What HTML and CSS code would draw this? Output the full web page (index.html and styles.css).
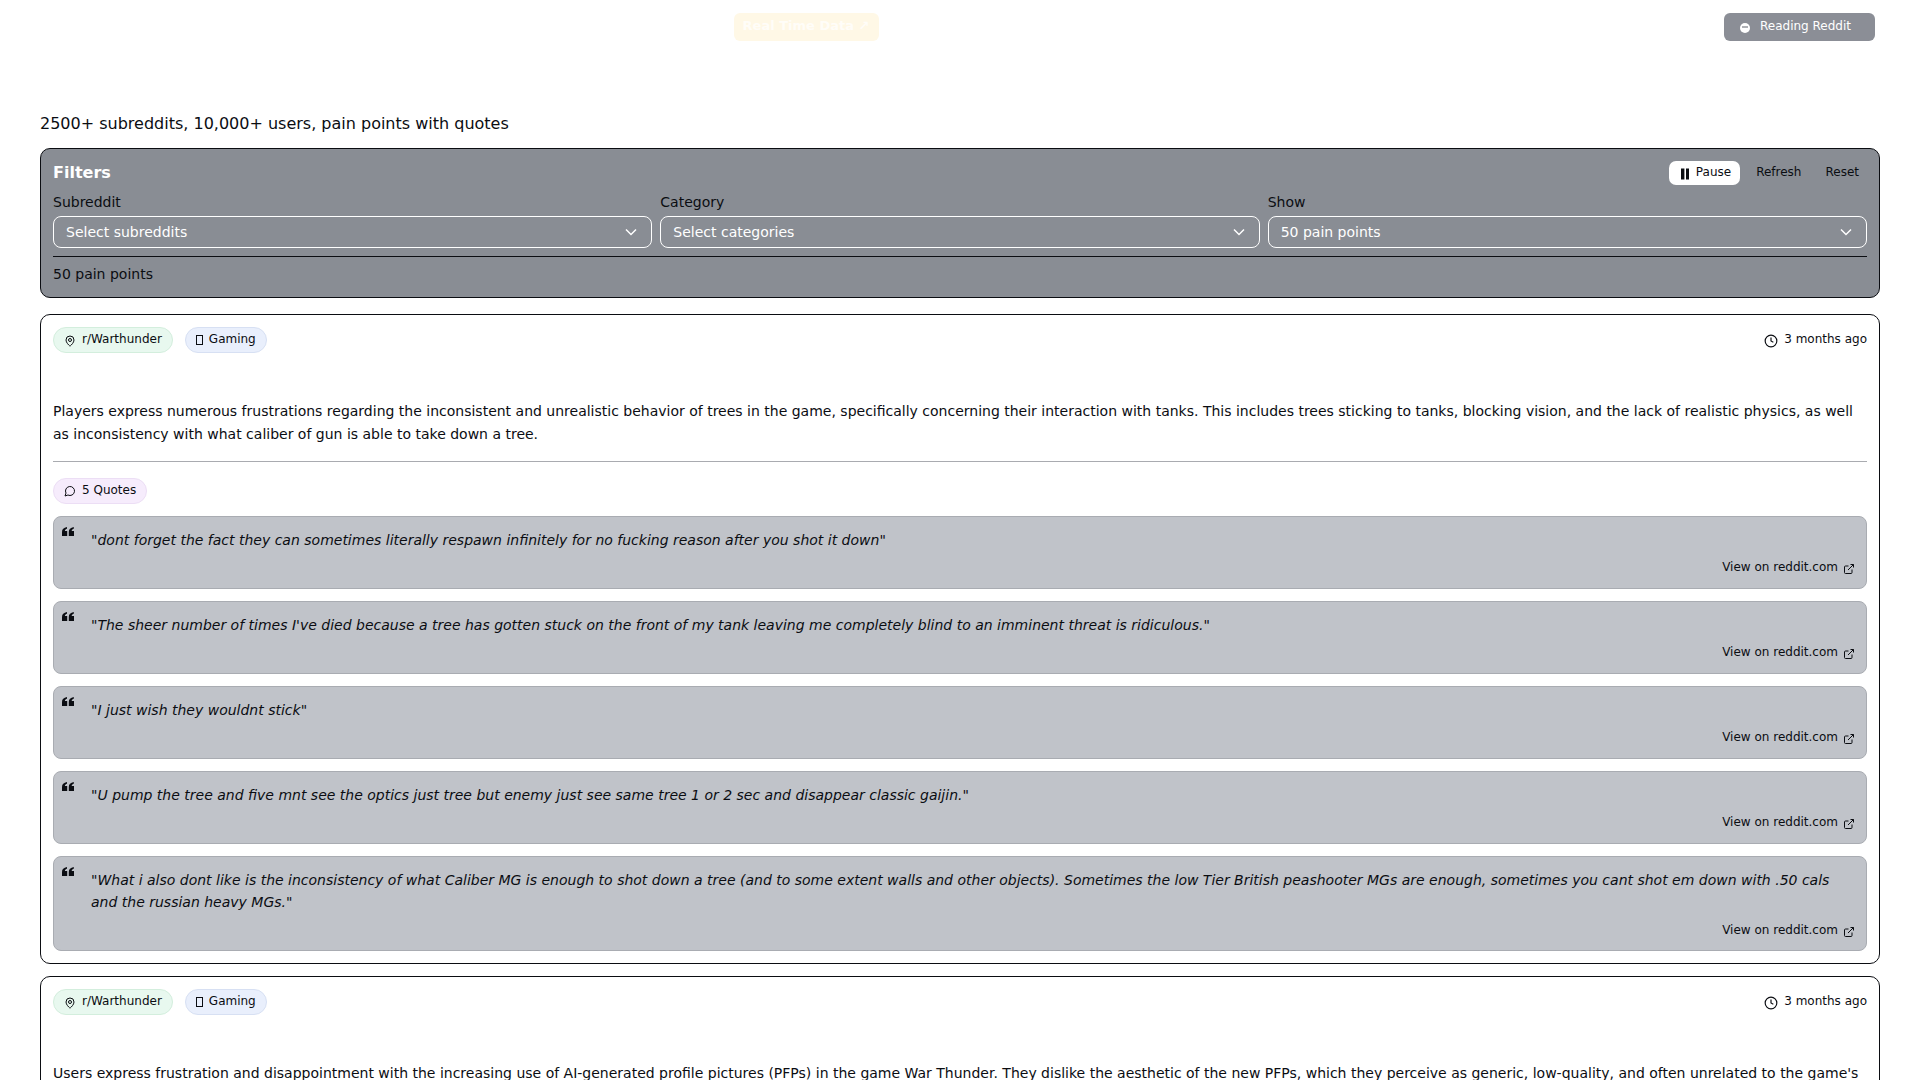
FILE: index.html
```html
<!DOCTYPE html>
<html lang="en">
<head>
    <meta charset="UTF-8">
    <meta name="viewport" content="width=device-width, initial-scale=1.0">
    <title>Pain Points</title>
    <link rel="stylesheet" href="styles.css">
</head>
<body>
    <header class="topbar">
        <a class="live-pill">Real Time Data ↗</a>
        <div class="reading-pill">
            <svg class="reading-icon" viewBox="0 0 12 12"><circle cx="6" cy="6" r="5" fill="currentColor"/><path d="M3 5h6" stroke="#8b8e96" stroke-width="1.4"/></svg>
            Reading Reddit
        </div>
    </header>

    <p class="tagline">2500+ subreddits, 10,000+ users, pain points with quotes</p>

    <section class="filters">
        <div class="filters-head">
            <h2>Filters</h2>
            <div class="filter-actions">
                <button class="btn btn-active">
                    <svg class="pause-icon" viewBox="0 0 12 12"><path d="M2 0.500h3.400v11H2zM7 0.500h3v11H7z" fill="currentColor"/></svg>
                    Pause
                </button>
                <button class="btn">Refresh</button>
                <button class="btn">Reset</button>
            </div>
        </div>
        <div class="filter-grid">
            <div class="field">
                <label>Subreddit</label>
                <div class="select">
                    <span>Select subreddits</span>
                    <svg class="chevron" viewBox="0 0 12 12"><path d="M1 3.500l5 5 5-5"/></svg>
                </div>
            </div>
            <div class="field">
                <label>Category</label>
                <div class="select">
                    <span>Select categories</span>
                    <svg class="chevron" viewBox="0 0 12 12"><path d="M1 3.500l5 5 5-5"/></svg>
                </div>
            </div>
            <div class="field">
                <label>Show</label>
                <div class="select">
                    <span>50 pain points</span>
                    <svg class="chevron" viewBox="0 0 12 12"><path d="M1 3.500l5 5 5-5"/></svg>
                </div>
            </div>
        </div>
        <div class="filter-count">50 pain points</div>
    </section>

    <article class="card">
        <div class="card-head">
            <div class="tags">
                <span class="tag tag-green">
                    <svg class="tag-icon" viewBox="0 0 24 24"><path d="M20 10c0 5-5.500 10.200-7.400 11.800a1 1 0 0 1-1.200 0C9.500 20.200 4 15 4 10a8 8 0 0 1 16 0"/><circle cx="12" cy="10" r="3"/></svg>
                    r/Warthunder
                </span>
                <span class="tag tag-blue"><span class="tofu"></span>Gaming</span>
            </div>
            <span class="time">
                <svg class="time-icon" viewBox="0 0 24 24"><circle cx="12" cy="12" r="10"/><path d="M12 6v6l4 2"/></svg>
                3 months ago
            </span>
        </div>
        <p class="summary">Players express numerous frustrations regarding the inconsistent and unrealistic behavior of trees in the game, specifically concerning their interaction with tanks. This includes trees sticking to tanks, blocking vision, and the lack of realistic physics, as well as inconsistency with what caliber of gun is able to take down a tree.</p>
        <hr class="rule">
        <span class="tag tag-purple">
            <svg class="tag-icon" viewBox="0 0 24 24"><path d="M7.900 20A9 9 0 1 0 4 16.100L2 22Z"/></svg>
            5 Quotes
        </span>
        <div class="quotes">
            <div class="quote">
                <svg class="quote-mark" viewBox="0 0 12 9"><path d="M0 9V5C0 2.200 1.700.6 5 0v1.800C3.600 2.200 2.900 3 2.900 4h2.300v5zM6.800 9V5C6.800 2.200 8.500.6 11.800 0v1.800C10.400 2.200 9.700 3 9.700 4H12v5z"/></svg>
                <p>"dont forget the fact they can sometimes literally respawn infinitely for no fucking reason after you shot it down"</p>
                <a class="quote-link">View on reddit.com <svg class="link-icon" viewBox="0 0 24 24"><path d="M15 3h6v6M10 14 21 3M18 13v6a2 2 0 0 1-2 2H5a2 2 0 0 1-2-2V8a2 2 0 0 1 2-2h6"/></svg></a>
            </div>
            <div class="quote">
                <svg class="quote-mark" viewBox="0 0 12 9"><path d="M0 9V5C0 2.200 1.700.6 5 0v1.800C3.600 2.200 2.900 3 2.900 4h2.300v5zM6.800 9V5C6.800 2.200 8.500.6 11.800 0v1.800C10.400 2.200 9.700 3 9.700 4H12v5z"/></svg>
                <p>"The sheer number of times I've died because a tree has gotten stuck on the front of my tank leaving me completely blind to an imminent threat is ridiculous."</p>
                <a class="quote-link">View on reddit.com <svg class="link-icon" viewBox="0 0 24 24"><path d="M15 3h6v6M10 14 21 3M18 13v6a2 2 0 0 1-2 2H5a2 2 0 0 1-2-2V8a2 2 0 0 1 2-2h6"/></svg></a>
            </div>
            <div class="quote">
                <svg class="quote-mark" viewBox="0 0 12 9"><path d="M0 9V5C0 2.200 1.700.6 5 0v1.800C3.600 2.200 2.900 3 2.900 4h2.300v5zM6.800 9V5C6.800 2.200 8.500.6 11.800 0v1.800C10.400 2.200 9.700 3 9.700 4H12v5z"/></svg>
                <p>"I just wish they wouldnt stick"</p>
                <a class="quote-link">View on reddit.com <svg class="link-icon" viewBox="0 0 24 24"><path d="M15 3h6v6M10 14 21 3M18 13v6a2 2 0 0 1-2 2H5a2 2 0 0 1-2-2V8a2 2 0 0 1 2-2h6"/></svg></a>
            </div>
            <div class="quote">
                <svg class="quote-mark" viewBox="0 0 12 9"><path d="M0 9V5C0 2.200 1.700.6 5 0v1.800C3.600 2.200 2.900 3 2.900 4h2.300v5zM6.800 9V5C6.800 2.200 8.500.6 11.800 0v1.800C10.400 2.200 9.700 3 9.700 4H12v5z"/></svg>
                <p>"U pump the tree and five mnt see the optics just tree but enemy just see same tree 1 or 2 sec and disappear classic gaijin."</p>
                <a class="quote-link">View on reddit.com <svg class="link-icon" viewBox="0 0 24 24"><path d="M15 3h6v6M10 14 21 3M18 13v6a2 2 0 0 1-2 2H5a2 2 0 0 1-2-2V8a2 2 0 0 1 2-2h6"/></svg></a>
            </div>
            <div class="quote">
                <svg class="quote-mark" viewBox="0 0 12 9"><path d="M0 9V5C0 2.200 1.700.6 5 0v1.800C3.600 2.200 2.900 3 2.900 4h2.300v5zM6.800 9V5C6.800 2.200 8.500.6 11.800 0v1.800C10.400 2.200 9.700 3 9.700 4H12v5z"/></svg>
                <p>"What i also dont like is the inconsistency of what Caliber MG is enough to shot down a tree (and to some extent walls and other objects). Sometimes the low Tier British peashooter MGs are enough, sometimes you cant shot em down with .50 cals and the russian heavy MGs."</p>
                <a class="quote-link">View on reddit.com <svg class="link-icon" viewBox="0 0 24 24"><path d="M15 3h6v6M10 14 21 3M18 13v6a2 2 0 0 1-2 2H5a2 2 0 0 1-2-2V8a2 2 0 0 1 2-2h6"/></svg></a>
            </div>
        </div>
    </article>

    <article class="card">
        <div class="card-head">
            <div class="tags">
                <span class="tag tag-green">
                    <svg class="tag-icon" viewBox="0 0 24 24"><path d="M20 10c0 5-5.500 10.200-7.400 11.800a1 1 0 0 1-1.200 0C9.500 20.200 4 15 4 10a8 8 0 0 1 16 0"/><circle cx="12" cy="10" r="3"/></svg>
                    r/Warthunder
                </span>
                <span class="tag tag-blue"><span class="tofu"></span>Gaming</span>
            </div>
            <span class="time">
                <svg class="time-icon" viewBox="0 0 24 24"><circle cx="12" cy="12" r="10"/><path d="M12 6v6l4 2"/></svg>
                3 months ago
            </span>
        </div>
        <p class="summary">Users express frustration and disappointment with the increasing use of AI-generated profile pictures (PFPs) in the game War Thunder. They dislike the aesthetic of the new PFPs, which they perceive as generic, low-quality, and often unrelated to the game's</p>
    </article>
</body>
</html>
```

FILE: styles.css
```css
* {
    box-sizing: border-box;
}
body {
    margin: 0;
    padding: 0 40px;
    background: #fff;
    color: #0b0d12;
    font-family: "DejaVu Sans", sans-serif;
    font-size: 14px;
}
.topbar {
    position: relative;
    display: flex;
    justify-content: center;
    height: 112px;
    padding-top: 13px;
}
.live-pill {
    height: 28px;
    width: 145px;
    margin-right: 308px;
    padding-top: 5px;
    background: #fff8e6;
    border-radius: 6px;
    color: #fffdf8;
    font-size: 13px;
    font-weight: bold;
    text-align: center;
}
.reading-pill {
    position: absolute;
    top: 13px;
    right: 5px;
    display: flex;
    align-items: center;
    gap: 9px;
    height: 28px;
    padding: 0 24px 3px 15px;
    background: #8b8e96;
    border-radius: 6px;
    color: #fff;
    font-size: 12px;
}
.reading-icon {
    width: 12px;
    height: 12px;
    margin-top: 4px;
}
.tagline {
    margin: 0 0 13px;
    font-size: 16px;
    line-height: 23px;
}
.filters {
    height: 150px;
    padding: 12px 12px 0;
    background: #898d94;
    border: 1.5px solid #0b0d12;
    border-radius: 10px;
}
.filters-head {
    display: flex;
    justify-content: space-between;
    align-items: center;
    height: 24px;
    margin-bottom: 7px;
}
.filters-head h2 {
    margin: 0 0 1px;
    color: #fff;
    font-size: 16px;
    font-weight: bold;
}
.filter-actions {
    display: flex;
    gap: 8px;
}
.btn {
    display: flex;
    align-items: center;
    gap: 5px;
    height: 24px;
    padding: 0 8px 2px;
    background: none;
    border: none;
    border-radius: 7px;
    color: #0b0d12;
    font-family: inherit;
    font-size: 12px;
}
.btn-active {
    padding: 0 9px 2px 10px;
    background: #fff;
}
.pause-icon {
    width: 12px;
    height: 12px;
    margin-top: 3px;
}
.filter-grid {
    display: grid;
    grid-template-columns: repeat(3, 1fr);
    gap: 8px;
}
.field label {
    display: block;
    height: 24px;
    font-size: 14px;
    line-height: 20px;
}
.select {
    display: flex;
    justify-content: space-between;
    align-items: center;
    height: 32px;
    padding: 0 14px 0 12px;
    border: 1px solid #fff;
    border-radius: 8px;
    color: #fff;
    font-size: 14px;
}
.chevron {
    width: 12px;
    height: 12px;
    fill: none;
    stroke: #fff;
    stroke-width: 1.500;
}
.filter-count {
    margin-top: 8px;
    padding-top: 7px;
    border-top: 1px solid #0b0d12;
    font-size: 14px;
    line-height: 20px;
}
.card {
    margin-top: 16px;
    padding: 12px;
    background: #fff;
    border: 1.5px solid #0b0d12;
    border-radius: 10px;
}
.card + .card {
    margin-top: 12px;
}
.card-head {
    display: flex;
    justify-content: space-between;
    align-items: flex-start;
    margin-bottom: 47px;
}
.tags {
    display: flex;
    gap: 12px;
}
.tag {
    display: inline-flex;
    align-items: center;
    gap: 6px;
    height: 26px;
    padding: 0 10px 2px;
    border: 1px solid;
    border-radius: 13px;
    font-size: 12px;
    line-height: 20px;
}
.tag-green {
    background: #e8f8ef;
    border-color: #d3eedd;
}
.tag-blue {
    background: #e9effc;
    border-color: #d7e0f3;
}
.tag-purple {
    background: #f6ecfc;
    border-color: #ecdef5;
}
.tag-icon {
    width: 12px;
    height: 12px;
    margin-top: 3px;
    fill: none;
    stroke: currentColor;
    stroke-width: 2;
}
.tofu {
    width: 7px;
    height: 10px;
    border: 1px solid #0b0d12;
    margin-top: 2px;
}
.time {
    display: flex;
    align-items: center;
    gap: 6px;
    height: 24px;
    font-size: 12px;
}
.time-icon {
    width: 14px;
    height: 14px;
    margin-top: 3px;
    fill: none;
    stroke: currentColor;
    stroke-width: 2;
}
.summary {
    margin: 0;
    line-height: 22.750px;
}
.rule {
    margin: 15px 0 16px;
    border: none;
    border-top: 1px solid #a9abb0;
}
.quotes {
    display: flex;
    flex-direction: column;
    gap: 12px;
    margin-top: 12px;
}
.quote {
    position: relative;
    padding: 12px 12px 10.250px 37px;
    background: #c0c3c9;
    border: 1px solid #a9acb2;
    border-radius: 8px;
}
.quote p {
    margin: 0;
    font-style: italic;
    line-height: 22.750px;
}
.quote-mark {
    position: absolute;
    left: 8px;
    top: 10px;
    width: 12px;
    height: 9px;
    fill: #0b0d12;
}
.quote-link {
    display: flex;
    justify-content: flex-end;
    align-items: center;
    gap: 5px;
    margin: 6px -1px 0 0;
    font-size: 12px;
    line-height: 20px;
}
.link-icon {
    width: 12px;
    height: 12px;
    margin-top: 3px;
    fill: none;
    stroke: currentColor;
    stroke-width: 2;
}
```
